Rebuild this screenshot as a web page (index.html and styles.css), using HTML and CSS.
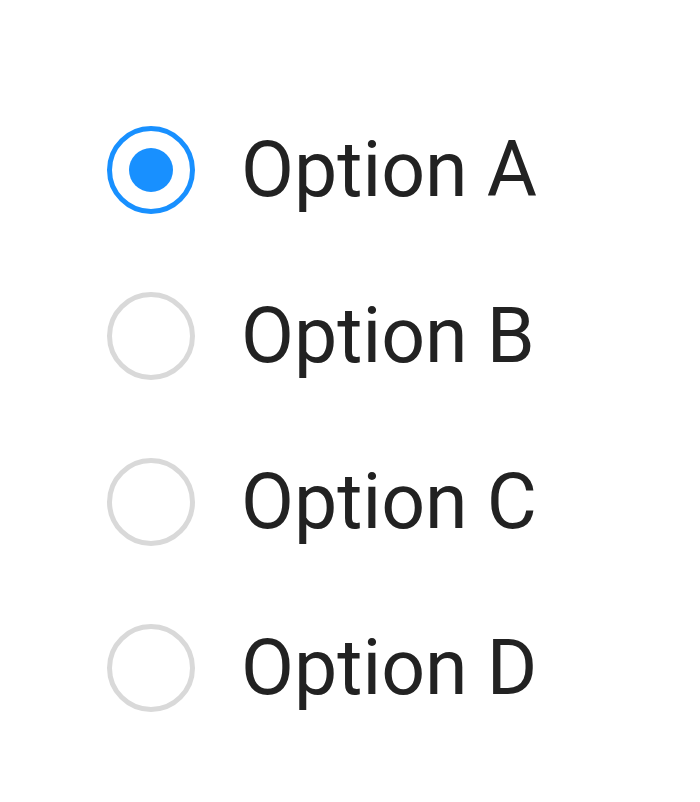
FILE: index.html
```html
<!DOCTYPE html>
<html>
<head>
<meta charset="utf-8">
<link rel="stylesheet" href="styles.css">
</head>
<body>
<div class="group">
  <label class="option"><span class="radio checked"></span><span class="label">Option A</span></label>
  <label class="option"><span class="radio"></span><span class="label">Option B</span></label>
  <label class="option"><span class="radio"></span><span class="label">Option C</span></label>
  <label class="option"><span class="radio"></span><span class="label">Option D</span></label>
</div>
</body>
</html>
```
FILE: styles.css
```css
html, body {
  margin: 0;
  background: #ffffff;
}
body {
  width: 700px;
  height: 802px;
  overflow: hidden;
}
.group {
  display: flex;
  flex-direction: column;
  padding-top: 87px;
  padding-left: 107px;
}
.option {
  display: flex;
  align-items: center;
  height: 166px;
  gap: 46px;
}
.radio {
  box-sizing: border-box;
  width: 88px;
  height: 88px;
  border-radius: 50%;
  border: 5px solid #d9d9d9;
  display: flex;
  align-items: center;
  justify-content: center;
  flex-shrink: 0;
}
.radio.checked {
  border-color: #1890ff;
}
.radio.checked::after {
  content: "";
  width: 44px;
  height: 44px;
  border-radius: 50%;
  background: #1890ff;
}
.label {
  font-family: Roboto, "Noto Sans", sans-serif;
  font-size: 77px;
  color: #222222;
  line-height: 1;
}
```
